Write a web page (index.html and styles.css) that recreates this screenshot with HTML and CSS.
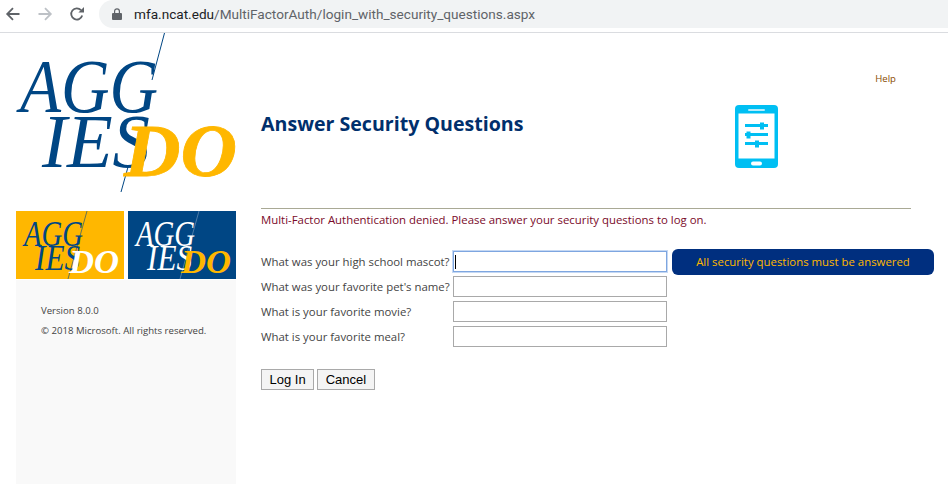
FILE: index.html
```html
<!DOCTYPE html>
<html lang="en">
<head>
<meta charset="utf-8">
<title>Answer Security Questions</title>
<link rel="stylesheet" href="styles.css">
</head>
<body>
<header class="toolbar">
  <svg class="nav" width="16" height="16" viewBox="0 0 16 16"><path d="M14.500 8H2.500M8 2.200L2.200 8L8 13.800" fill="none" stroke="#5f6368" stroke-width="1.800"/></svg>
  <svg class="nav fwd" width="16" height="16" viewBox="0 0 16 16"><path d="M1.500 8H13.500M8 2.200L13.800 8L8 13.800" fill="none" stroke="#bdc1c6" stroke-width="1.800"/></svg>
  <svg class="nav reload" width="16" height="16" viewBox="0 0 16 16"><path d="M13.200 9.500A5.600 5.600 0 1 1 12 4.200" fill="none" stroke="#5f6368" stroke-width="1.800"/><path d="M9.400 6.600H15V1z" fill="#5f6368"/></svg>
  <div class="omnibox">
    <svg width="10" height="12" viewBox="0 0 10 12"><path d="M1 5h8a1 1 0 0 1 1 1v5a1 1 0 0 1-1 1H1a1 1 0 0 1-1-1V6a1 1 0 0 1 1-1z" fill="#5f6368"/><path d="M2.600 5V3.200a2.400 2.400 0 0 1 4.800 0V5" fill="none" stroke="#5f6368" stroke-width="1.200"/></svg>
    <span class="url"><span class="host">mfa.ncat.edu</span>/MultiFactorAuth/login_with_security_questions.aspx</span>
  </div>
</header>
<div class="page">
  <aside class="sidebar">
    <div class="logo-area">
      <svg class="logo" width="220" height="178" viewBox="16 33 220 178">
        <path d="M164.500 33L152 80M128 167L121 192" stroke="#004684" stroke-width="1" fill="none"/>
        <text x="20" y="112" class="lg" textLength="138" lengthAdjust="spacingAndGlyphs" fill="#004684">AGG</text>
        <text x="42" y="167" class="lg" textLength="108" lengthAdjust="spacingAndGlyphs" fill="#004684">IES</text>
        <text x="124" y="176" class="lg do" textLength="113" lengthAdjust="spacingAndGlyphs" fill="#ffb700">DO</text>
      </svg>
    </div>
    <div class="tiles">
      <svg class="tile gold" viewBox="0 0 108 68"><path d="M71 0L52 68" stroke="#004684" stroke-width=".6"/><text x="8" y="35" class="t-agg" textLength="59" lengthAdjust="spacingAndGlyphs" fill="#004684">AGG</text><text x="19" y="59" class="t-agg" textLength="45" lengthAdjust="spacingAndGlyphs" fill="#004684">IES</text><text x="53" y="62" class="t-do" textLength="50" lengthAdjust="spacingAndGlyphs" fill="#fff">DO</text></svg>
      <svg class="tile blue" viewBox="0 0 108 68"><path d="M71 0L52 68" stroke="#7f9fc0" stroke-width=".6"/><text x="8" y="35" class="t-agg" textLength="59" lengthAdjust="spacingAndGlyphs" fill="#fff">AGG</text><text x="19" y="59" class="t-agg" textLength="45" lengthAdjust="spacingAndGlyphs" fill="#fff">IES</text><text x="53" y="62" class="t-do" textLength="50" lengthAdjust="spacingAndGlyphs" fill="#ffb700">DO</text></svg>
    </div>
    <div class="about">
      <p>Version 8.0.0</p>
      <p>© 2018 Microsoft. All rights reserved.</p>
    </div>
  </aside>
  <main class="content">
    <a class="help" href="#">Help</a>
    <div class="heading">
      <h1>Answer Security Questions</h1>
      <svg class="phone" width="43" height="63" viewBox="0 0 43 63">
        <rect width="43" height="63" rx="4" fill="#00bff3"/>
        <rect x="3.500" y="8.500" width="36" height="45" fill="#fff"/>
        <rect x="13" y="4" width="17" height="2" rx="1" fill="#b5ecfb"/>
        <rect x="16" y="56.500" width="11" height="4" rx="2" fill="#fff"/>
        <path d="M10 20.500H33M10 29.500H33M10 38.500H33" stroke="#00bff3" stroke-width="3"/>
        <path d="M25 18h4v7h-4zM11.500 27h4v7h-4zM20 36h4v7h-4z" fill="#00bff3" transform="translate(0 -.500)"/>
      </svg>
    </div>
    <hr class="rule">
    <p class="denied">Multi-Factor Authentication denied. Please answer your security questions to log on.</p>
    <form class="questions">
      <label for="q1">What was your high school mascot?</label>
      <div class="caret-wrap"><input id="q1" class="field focused" type="text"><span class="caret"></span></div>
      <div class="notice">All security questions must be answered</div>
      <label for="q2">What was your favorite pet's name?</label>
      <input id="q2" class="field" type="text">
      <label for="q3">What is your favorite movie?</label>
      <input id="q3" class="field" type="text">
      <label for="q4">What is your favorite meal?</label>
      <input id="q4" class="field" type="text">
    </form>
    <div class="actions">
      <button class="btn" type="button">Log In</button>
      <button class="btn" type="button">Cancel</button>
    </div>
  </main>
</div>
</body>
</html>
```
FILE: styles.css
```css
* { box-sizing: border-box; }
html, body { margin: 0; height: 100%; overflow: hidden; }
body { background: #fff; font-family: "Open Sans", "Noto Sans", sans-serif; color: #444; }

.toolbar { display: flex; align-items: center; height: 33px; border-bottom: 1px solid #dadce0; background: #fff; padding-left: 5px; }
.nav { flex: none; margin: -4px 16px 0 0; }
.nav.reload { margin-right: 14px; }
.omnibox { display: flex; align-items: center; gap: 12px; flex: 1; height: 28px; margin-top: -4px; padding-left: 13px; background: #f1f3f4; border-radius: 14px 0 0 14px; }
.url { font: 13.600px "Roboto", sans-serif; color: #5f6368; }
.host { color: #202124; }

.page { display: flex; height: 451px; padding-left: 16px; }
.sidebar { width: 220px; flex: none; display: flex; flex-direction: column; }
.logo-area { height: 178px; }
.logo { display: block; overflow: visible; }
.lg { font: italic 76px "Liberation Serif", serif; }
.lg.do { font-size: 74px; font-weight: bold; stroke: #ffb700; stroke-width: .8px; }
.tiles { display: flex; gap: 4px; height: 69px; }
.tile { width: 108px; height: 68px; display: block; }
.tile.gold { background: #ffb700; }
.tile.blue { background: #004684; }
.t-agg { font: italic 35px "Liberation Serif", serif; }
.t-do { font: italic bold 33px "Liberation Serif", serif; }
.about { flex: 1; background: #f9f9f9; padding: 25px 0 0 25px; font-size: 9.600px; color: #444; }
.about p { margin: 0 0 8px; line-height: 12px; }

.content { width: 650px; margin-left: 25px; position: relative; }
.help { position: absolute; right: 15px; top: 40px; font-size: 9.600px; color: #8a4b00; text-decoration: none; line-height: 12px; }
.heading { display: flex; height: 175px; padding-top: 72px; }
h1 { margin: 0; font-size: 19.600px; font-weight: 700; color: #002f6c; line-height: 38px; width: 474px; }
.phone { flex: none; }
.rule { margin: 0; border: 0; border-top: 1px solid #a9a995; }
.denied { margin: 4px 0 0; font-size: 11.400px; line-height: 14px; color: #7a0a2a; }
.questions { display: grid; grid-template-columns: 192px 214px 267px; grid-auto-rows: 25px; align-items: center; margin-top: 22px; font-size: 11.400px; width: 673px; }
.questions label { grid-column: 1; line-height: 14px; white-space: nowrap; }
.field, .caret-wrap { grid-column: 2; }
.caret-wrap { position: relative; }
.field { display: block; width: 214px; height: 21px; border: 1px solid #a9a9a9; background: #fff; padding: 0; }
.field.focused { border-color: #7ea6e0; box-shadow: 0 0 0 1px #c5d8f3; outline: 0; }
.caret { position: absolute; left: 2px; top: 4px; width: 1px; height: 14px; background: #000; }
.notice { grid-column: 3; margin-left: 5px; width: 262px; height: 26px; background: #002f7f; border-radius: 6px; color: #ffb700; text-align: center; line-height: 26px; font-size: 11.400px; }
.actions { display: flex; gap: 3px; margin-top: 20px; }
.btn { height: 21px; padding: 0 7.500px; border: 1px solid #a9a9a9; background: #f4f4f4; font: 13px "Liberation Sans", sans-serif; color: #000; }
```
